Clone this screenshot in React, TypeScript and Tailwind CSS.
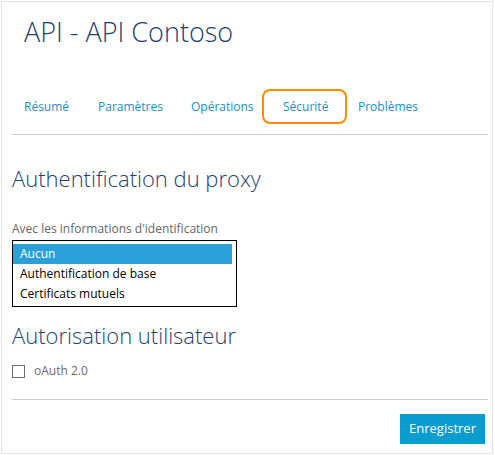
export default function App() {
  const tabs = [
    { name: "Résumé", w: "w-[74px]" },
    { name: "Paramètres", w: "w-[93px]" },
    { name: "Opérations", w: "w-[92px]" },
    { name: "Sécurité", w: "w-[75px]", active: true },
    { name: "Problèmes", w: "w-[80px]" },
  ];
  const options = ["Aucun", "Authentification de base", "Certificats mutuels"];

  return (
    <div className="w-[495px] h-[455px] bg-white pt-px pl-px font-['Open_Sans',sans-serif]">
      <div className="w-[492px] h-[453px] border border-[#e3e3e3] pl-[10px] pr-[4px] flex flex-col">
        <h1 className="ml-3 mt-[13px] text-[27px] leading-[34px] font-light text-[#1f3f6e]">
          API - API Contoso
        </h1>

        <div className="mt-[41px] ml-3 flex items-center h-[34px] text-[12px] text-[#1590cc]">
          {tabs.map((t) => (
            <div key={t.name} className={`${t.w} relative`}>
              {t.active && (
                <span className="absolute -left-[21px] right-[11px] -top-[9px] -bottom-[8px] rounded-[8px] border-2 border-[#ff8c00]" />
              )}
              {t.name}
            </div>
          ))}
        </div>
        <div className="mt-[10px] h-px bg-[#cccccc]" />

        <h2 className="mt-[28px] text-[22px] leading-[30px] font-light text-[#1f3f6e]">
          Authentification du proxy
        </h2>
        <p className="mt-[28px] text-[12px] leading-[16px] text-[#666666]">
          Avec les informations d'identification
        </p>
        <div className="mt-[3px] w-[225px] h-[67px] border border-black pt-[3px] pr-[4px]">
          {options.map((o, i) => (
            <div
              key={o}
              className={`h-[20px] pl-[7px] text-[12px] leading-[20px] ${
                i === 0 ? "bg-[#2a9fd9] text-white" : "text-black"
              }`}
            >
              {o}
            </div>
          ))}
        </div>

        <h2 className="mt-[13px] text-[22px] leading-[30px] font-light text-[#1f3f6e]">
          Autorisation utilisateur
        </h2>
        <label className="mt-[12px] flex items-center gap-[9px] text-[12px] text-[#6b6b6b]">
          <span className="w-[13px] h-[13px] border border-[#6b6b6b] bg-white" />
          oAuth 2.0
        </label>
        <div className="mt-[19px] h-px bg-[#cccccc]" />

        <div className="mt-[14px] flex justify-end pr-[3px]">
          <button className="w-[85px] h-[30px] bg-[#0a9bcf] text-white text-[13px]">
            Enregistrer
          </button>
        </div>
      </div>
    </div>
  );
}
